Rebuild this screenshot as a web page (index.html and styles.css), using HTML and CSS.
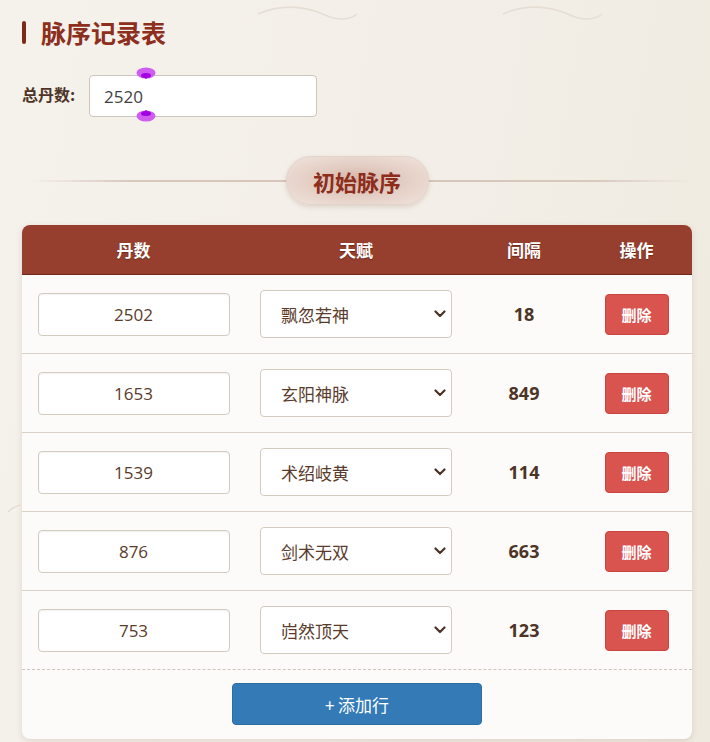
FILE: index.html
```html
<!DOCTYPE html>
<html lang="zh">
<head>
<meta charset="utf-8">
<title>脉序记录表</title>
<link rel="stylesheet" href="styles.css">
</head>
<body>
<svg class="deco" width="710" height="742" viewBox="0 0 710 742" aria-hidden="true">
  <path d="M258 14 C 285 2, 310 8, 325 15 C 338 21, 350 20, 357 14" fill="none" stroke="#e6ded4" stroke-width="1.6"/>
  <path d="M503 14 C 530 2, 555 8, 570 15 C 583 21, 595 20, 602 14" fill="none" stroke="#e6ded4" stroke-width="1.6"/>
  <path d="M8 512 C 12 508, 16 506, 20 505" fill="none" stroke="#e2d9ce" stroke-width="1.2"/>
</svg>
<main class="page">
  <h1 class="title"><span class="title-bar"></span>脉序记录表</h1>

  <div class="total">
    <label class="total-label" for="total">总丹数:</label>
    <div class="total-field">
      <input id="total" class="total-input" type="text" value="2520">
      <svg class="handle handle-top" width="20" height="14" viewBox="0 0 20 14"><ellipse cx="10" cy="6" rx="9.5" ry="5.5" fill="#cf5ef0"/><path d="M5 8 L10 12 L15 8 Z" fill="#a200e0"/><ellipse cx="10" cy="8.5" rx="5" ry="2.5" fill="#a200e0"/></svg>
      <svg class="handle handle-bottom" width="20" height="14" viewBox="0 0 20 14"><ellipse cx="10" cy="8" rx="9.5" ry="5.5" fill="#cf5ef0"/><path d="M5 6 L10 2 L15 6 Z" fill="#a200e0"/><ellipse cx="10" cy="5.5" rx="5" ry="2.5" fill="#a200e0"/></svg>
    </div>
  </div>

  <div class="divider">
    <span class="divider-pill">初始脉序</span>
  </div>

  <section class="card">
    <div class="row head">
      <div class="cell">丹数</div>
      <div class="cell">天赋</div>
      <div class="cell">间隔</div>
      <div class="cell">操作</div>
    </div>

    <div class="row">
      <div class="cell"><input class="num-input" type="text" value="2502"></div>
      <div class="cell"><div class="select-wrap"><select class="talent"><option>飘忽若神</option></select><svg class="chev" width="12" height="8" viewBox="0 0 12 8"><path d="M1.5 1.5 L6 6 L10.5 1.5" fill="none" stroke="#4a3326" stroke-width="2.2" stroke-linecap="round" stroke-linejoin="round"/></svg></div></div>
      <div class="cell gap">18</div>
      <div class="cell"><button class="del" type="button">删除</button></div>
    </div>

    <div class="row">
      <div class="cell"><input class="num-input" type="text" value="1653"></div>
      <div class="cell"><div class="select-wrap"><select class="talent"><option>玄阳神脉</option></select><svg class="chev" width="12" height="8" viewBox="0 0 12 8"><path d="M1.5 1.5 L6 6 L10.5 1.5" fill="none" stroke="#4a3326" stroke-width="2.2" stroke-linecap="round" stroke-linejoin="round"/></svg></div></div>
      <div class="cell gap">849</div>
      <div class="cell"><button class="del" type="button">删除</button></div>
    </div>

    <div class="row">
      <div class="cell"><input class="num-input" type="text" value="1539"></div>
      <div class="cell"><div class="select-wrap"><select class="talent"><option>术绍岐黄</option></select><svg class="chev" width="12" height="8" viewBox="0 0 12 8"><path d="M1.5 1.5 L6 6 L10.5 1.5" fill="none" stroke="#4a3326" stroke-width="2.2" stroke-linecap="round" stroke-linejoin="round"/></svg></div></div>
      <div class="cell gap">114</div>
      <div class="cell"><button class="del" type="button">删除</button></div>
    </div>

    <div class="row">
      <div class="cell"><input class="num-input" type="text" value="876"></div>
      <div class="cell"><div class="select-wrap"><select class="talent"><option>剑术无双</option></select><svg class="chev" width="12" height="8" viewBox="0 0 12 8"><path d="M1.5 1.5 L6 6 L10.5 1.5" fill="none" stroke="#4a3326" stroke-width="2.2" stroke-linecap="round" stroke-linejoin="round"/></svg></div></div>
      <div class="cell gap">663</div>
      <div class="cell"><button class="del" type="button">删除</button></div>
    </div>

    <div class="row last">
      <div class="cell"><input class="num-input" type="text" value="753"></div>
      <div class="cell"><div class="select-wrap"><select class="talent"><option>岿然顶天</option></select><svg class="chev" width="12" height="8" viewBox="0 0 12 8"><path d="M1.5 1.5 L6 6 L10.5 1.5" fill="none" stroke="#4a3326" stroke-width="2.2" stroke-linecap="round" stroke-linejoin="round"/></svg></div></div>
      <div class="cell gap">123</div>
      <div class="cell"><button class="del" type="button">删除</button></div>
    </div>

    <div class="foot">
      <button class="add" type="button">+ 添加行</button>
    </div>
  </section>
</main>
</body>
</html>
```

FILE: styles.css
```css
* { box-sizing: border-box; }

html, body {
  margin: 0;
  height: 100%;
}

body {
  background: linear-gradient(100deg, #f5f1eb 0%, #f3efe8 55%, #efeadf 100%);
  font-family: "Noto Sans", "Noto Sans CJK SC", sans-serif;
  color: #5a3b2c;
  position: relative;
  overflow: hidden;
}

.deco {
  position: absolute;
  left: 0;
  top: 0;
  pointer-events: none;
}

.page {
  position: relative;
  padding: 17px 18px 0 22px;
}

.title {
  display: flex;
  align-items: center;
  gap: 15px;
  margin: 0;
  height: 30px;
  font-family: "Noto Sans CJK SC", sans-serif;
  font-size: 25px;
  font-weight: 700;
  color: #8d2f1d;
}

.title-bar {
  width: 4px;
  height: 23px;
  border-radius: 2px;
  background: #7d2a1a;
}

.total {
  display: flex;
  align-items: center;
  gap: 11px;
  margin-top: 28px;
}

.total-label {
  font-family: "Noto Sans CJK SC", sans-serif;
  font-size: 16px;
  font-weight: 700;
  color: #4e3426;
  margin-top: -4px;
  width: 56px;
}

.total-field {
  position: relative;
}

.total-input {
  width: 228px;
  height: 42px;
  border: 1px solid #cdc6bd;
  border-radius: 4px;
  background: #fff;
  padding: 0 14px;
  font-family: "Open Sans", "Noto Sans", sans-serif;
  font-size: 17px;
  color: #3f3f46;
  outline: none;
}

.handle {
  position: absolute;
  left: 47px;
}

.handle-top { top: -8px; }
.handle-bottom { top: 33px; }

.divider {
  position: relative;
  display: flex;
  justify-content: center;
  margin-top: 39px;
  height: 49px;
}

.divider::before {
  content: "";
  position: absolute;
  left: 8px;
  right: 0;
  top: 24px;
  height: 2px;
  background: linear-gradient(90deg, rgba(214, 198, 188, 0) 0%, #d8c8be 15%, #d6c4ba 50%, #d8c8be 85%, rgba(214, 198, 188, 0) 100%);
}

.divider-pill {
  position: relative;
  display: flex;
  align-items: center;
  justify-content: center;
  width: 143px;
  height: 49px;
  border-radius: 25px;
  border: 1px solid #e2d3cb;
  background: radial-gradient(ellipse at center, #d6b3a6 0%, #e3cdc3 45%, #f0e4dd 100%);
  box-shadow: 0 2px 5px rgba(120, 80, 60, 0.18);
  font-family: "Noto Sans CJK SC", sans-serif;
  font-size: 22px;
  font-weight: 700;
  color: #8d2d1c;
}

.card {
  margin-top: 20px;
  background: #fcfbf9;
  border-radius: 8px;
  box-shadow: 0 2px 6px rgba(100, 70, 50, 0.15);
  overflow: hidden;
}

.row {
  display: grid;
  grid-template-columns: 223px 222px 114px 111px;
  align-items: center;
  height: 79px;
  border-bottom: 1px solid #d9d1c7;
}

.row.head {
  height: 50px;
  background: #963f2f;
  border-bottom: 1px solid #6e2718;
  font-family: "Noto Sans CJK SC", sans-serif;
  font-size: 17px;
  font-weight: 700;
  color: #fff;
  text-shadow: 0 1px 1px rgba(60, 15, 5, 0.45);
}

.row.head .cell {
  text-align: center;
}

.row.last {
  border-bottom: 1px dashed #cfc5ba;
}

.cell {
  padding: 0 15px;
  display: flex;
  justify-content: center;
}

.num-input {
  width: 192px;
  height: 43px;
  border: 1px solid #d3cbc0;
  border-radius: 4px;
  background: #fff;
  box-shadow: inset 0 1px 2px rgba(0, 0, 0, 0.06);
  text-align: center;
  font-family: "Open Sans", "Noto Sans", sans-serif;
  font-size: 17px;
  color: #5a3b2c;
  outline: none;
}

.select-wrap {
  position: relative;
  width: 193px;
  height: 48px;
}

.talent {
  appearance: none;
  -webkit-appearance: none;
  width: 100%;
  height: 100%;
  border: 1px solid #d3cbc0;
  border-radius: 4px;
  background: #fff;
  padding: 0 30px 0 20px;
  font-family: "Noto Sans CJK SC", sans-serif;
  font-size: 17px;
  color: #5a3b2c;
  outline: none;
}

.chev {
  position: absolute;
  right: 6px;
  top: 20px;
  pointer-events: none;
}

.gap {
  font-family: "Open Sans", "Noto Sans", sans-serif;
  font-size: 18px;
  font-weight: 700;
  color: #4e3426;
}

.del {
  width: 64px;
  height: 41px;
  border: 1px solid #c9443f;
  border-radius: 4px;
  background: #d9534f;
  font-family: "Noto Sans CJK SC", sans-serif;
  font-size: 15px;
  font-weight: 700;
  color: #fff;
  padding: 0;
}

.foot {
  display: flex;
  justify-content: center;
  padding: 13px 0 14px;
}

.add {
  width: 250px;
  height: 42px;
  border: 1px solid #2e6da4;
  border-radius: 4px;
  background: #337ab7;
  font-family: "Noto Sans CJK SC", sans-serif;
  font-size: 17px;
  color: #fff;
  padding: 0;
}
```
